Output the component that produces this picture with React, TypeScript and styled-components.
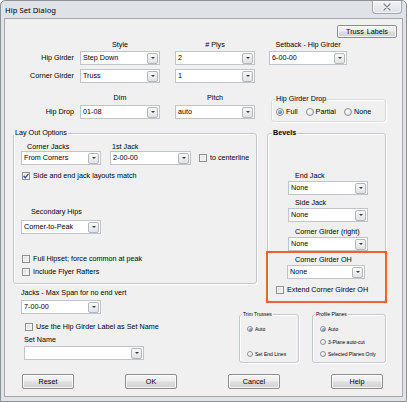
import React from 'react';
import styled, { createGlobalStyle } from 'styled-components';

const GlobalStyle = createGlobalStyle`
  * { box-sizing: border-box; }
  html, body { margin: 0; padding: 0; background: #ffffff; }
  body {
    font-family: "Liberation Sans", Arial, sans-serif;
    font-size: 7.2px;
    color: #000;
  }
`;

const Window = styled.div`
  width: 407px;
  height: 402px;
  display: flex;
  flex-direction: column;
  background: #dfe3e8;
  border: 1px solid #8d9196;
  border-radius: 5px 5px 0 0;
  overflow: hidden;
`;

const TitleBar = styled.div`
  height: 17px;
  flex-shrink: 0;
  display: flex;
  align-items: flex-start;
  justify-content: space-between;
  padding-left: 4px;
`;

const TitleText = styled.span`
  margin-top: 4px;
  font-family: "Noto Sans", "Liberation Sans", sans-serif;
  font-size: 7.7px;
  line-height: 10px;
  color: #000;
`;

const CloseButton = styled.div`
  width: 30px;
  height: 13px;
  margin-right: 4px;
  border: 1px solid #a4a8ae;
  border-top: none;
  border-radius: 0 0 4px 4px;
  background: linear-gradient(#f1f3f5, #dde1e6);
  box-shadow: inset 0 0 0 1px rgba(255, 255, 255, 0.6);
  display: flex;
  align-items: center;
  justify-content: center;
`;

const Client = styled.div`
  flex: 1;
  margin: 0 3px 4px 3px;
  background: #f0f0f0;
  border: 1px solid #a3a6ab;
  display: flex;
  flex-direction: column;
  padding-top: 6px;
`;

const TopBar = styled.div`
  display: flex;
  justify-content: flex-end;
  padding-right: 5px;
`;

const PushButton = styled.div<{ $w: number; $h: number }>`
  width: ${(p) => p.$w}px;
  height: ${(p) => p.$h}px;
  flex-shrink: 0;
  border: 1px solid #8b8d90;
  border-radius: 2px;
  background: linear-gradient(#f6f6f6 0%, #ececec 48%, #dedede 52%, #d2d2d2 100%);
  box-shadow: inset 0 0 0 1px rgba(255, 255, 255, 0.75);
  display: flex;
  align-items: center;
  justify-content: center;
  line-height: 8px;
  white-space: nowrap;
  word-spacing: 1px;
`;

const FormRow = styled.div<{ $mt?: number }>`
  display: flex;
  align-items: flex-start;
  margin-top: ${(p) => p.$mt ?? 0}px;
`;

const Column = styled.div<{ $w?: number }>`
  ${(p) => (p.$w ? `width: ${p.$w}px; flex-shrink: 0;` : 'flex: 1;')}
  display: flex;
  flex-direction: column;
`;

const ColHeader = styled.div<{ $w: number; $h: number }>`
  width: ${(p) => p.$w}px;
  height: ${(p) => p.$h}px;
  display: flex;
  align-items: center;
  justify-content: center;
  white-space: nowrap;
  line-height: 8px;
`;

const FieldStack = styled.div`
  display: flex;
  flex-direction: column;
  gap: 4px;
`;

const RowLabel = styled.div`
  height: 14px;
  display: flex;
  align-items: center;
  justify-content: flex-end;
  padding-right: 6px;
  white-space: nowrap;
  line-height: 8px;
`;

const Label = styled.div<{ $mt?: number; $ml?: number }>`
  margin-top: ${(p) => p.$mt ?? 0}px;
  margin-left: ${(p) => p.$ml ?? 0}px;
  height: 8px;
  line-height: 8px;
  white-space: nowrap;
`;

const ComboFrame = styled.div<{ $w: number; $mt?: number; $ml?: number }>`
  width: ${(p) => p.$w}px;
  height: 14px;
  flex-shrink: 0;
  margin-top: ${(p) => p.$mt ?? 0}px;
  margin-left: ${(p) => p.$ml ?? 0}px;
  background: #ffffff;
  border: 1px solid #c1c4c9;
  display: flex;
  align-items: center;
  padding-left: 2px;
`;

const ComboText = styled.span`
  flex: 1;
  overflow: hidden;
  white-space: nowrap;
  line-height: 12px;
`;

const ComboButton = styled.span`
  width: 11px;
  height: 11px;
  margin-right: 1px;
  border: 1px solid #b3b6bb;
  border-radius: 2px;
  background: linear-gradient(#f8f8f8, #e0e2e5);
  display: flex;
  align-items: center;
  justify-content: center;
  &::after {
    content: '';
    border-left: 2px solid transparent;
    border-right: 2px solid transparent;
    border-top: 2px solid #3c3c3c;
  }
`;

function Combo({ w, value, mt, ml }: { w: number; value: string; mt?: number; ml?: number }) {
  return (
    <ComboFrame $w={w} $mt={mt} $ml={ml}>
      <ComboText>{value}</ComboText>
      <ComboButton />
    </ComboFrame>
  );
}

const Group = styled.div<{ $w: number; $h?: number; $light?: boolean }>`
  position: relative;
  width: ${(p) => p.$w}px;
  ${(p) => (p.$h ? `height: ${p.$h}px;` : '')}
  flex-shrink: 0;
  border: 1px solid ${(p) => (p.$light ? '#dadcde' : '#c4c7cb')};
  border-radius: 3px;
  box-shadow: inset 1px 1px 0 #ffffff, 1px 1px 0 #ffffff;
  display: flex;
  flex-direction: column;
`;

const GroupTitle = styled.span<{ $left: number; $small?: boolean; $bold?: boolean }>`
  position: absolute;
  top: ${(p) => (p.$small ? -4 : -5)}px;
  left: ${(p) => p.$left}px;
  padding: 0 1px;
  background: #f0f0f0;
  font-size: ${(p) => (p.$small ? 5 : 7.2)}px;
  line-height: ${(p) => (p.$small ? 6 : 8)}px;
  font-weight: ${(p) => (p.$bold ? 700 : 400)};
  white-space: nowrap;
`;

const DropGroup = styled(Group)`
  margin-top: 8px;
  margin-left: 2px;
`;

const RadioRow = styled.div`
  display: flex;
  align-items: center;
  gap: 8px;
  padding: 8px 0 0 4px;
`;

const RadioItem = styled.div<{ $small?: boolean }>`
  display: flex;
  align-items: center;
  gap: 2px;
  white-space: nowrap;
  font-size: ${(p) => (p.$small ? 5 : 7.2)}px;
  line-height: ${(p) => (p.$small ? 6 : 8)}px;
`;

const RadioCircle = styled.span<{ $on?: boolean; $size: number }>`
  width: ${(p) => p.$size}px;
  height: ${(p) => p.$size}px;
  flex-shrink: 0;
  border-radius: 50%;
  border: 1px solid #8f9091;
  background: radial-gradient(circle at 35% 35%, #ffffff, #d6d6d6);
  display: flex;
  align-items: center;
  justify-content: center;
  &::after {
    content: '';
    display: ${(p) => (p.$on ? 'block' : 'none')};
    width: ${(p) => (p.$size > 7 ? 4 : 3)}px;
    height: ${(p) => (p.$size > 7 ? 4 : 3)}px;
    border-radius: 50%;
    background: radial-gradient(circle at 40% 35%, #a9c4e6, #2a5596);
  }
`;

function Radio({ label, on, small }: { label: string; on?: boolean; small?: boolean }) {
  return (
    <RadioItem $small={small}>
      <RadioCircle $on={on} $size={small ? 6 : 8} />
      <span>{label}</span>
    </RadioItem>
  );
}

const CheckItem = styled.div<{ $mt?: number; $ml?: number; $mb?: number }>`
  display: flex;
  align-items: center;
  gap: 3px;
  margin-top: ${(p) => p.$mt ?? 0}px;
  margin-left: ${(p) => p.$ml ?? 0}px;
  margin-bottom: ${(p) => p.$mb ?? 0}px;
  white-space: nowrap;
  line-height: 8px;
`;

const CheckBox = styled.span`
  width: 8px;
  height: 8px;
  flex-shrink: 0;
  border: 1px solid #8e8f8f;
  background: linear-gradient(135deg, #d9d9d9, #fbfbfb);
  box-shadow: inset 0 0 0 1px #f3f3f3;
  display: flex;
  align-items: center;
  justify-content: center;
`;

function Check({ label, checked, mt, ml, mb }: { label: string; checked?: boolean; mt?: number; ml?: number; mb?: number }) {
  return (
    <CheckItem $mt={mt} $ml={ml} $mb={mb}>
      <CheckBox>
        {checked && (
          <svg width="6" height="6" viewBox="0 0 6 6">
            <path d="M0.6 3 L2.3 4.8 L5.4 0.9" fill="none" stroke="#2d4f86" strokeWidth="1.3" />
          </svg>
        )}
      </CheckBox>
      <span>{label}</span>
    </CheckItem>
  );
}

const MidSection = styled.div`
  display: flex;
  align-items: flex-start;
  gap: 10px;
  margin-top: 11px;
  padding-left: 8px;
`;

const LeftColumn = styled.div`
  width: 244px;
  flex-shrink: 0;
  display: flex;
  flex-direction: column;
`;

const LayoutGroup = styled(Group)`
  padding-top: 9px;
`;

const JackRow = styled.div`
  display: flex;
  align-items: flex-end;
  margin-left: 7px;
`;

const FieldCol = styled.div<{ $ml?: number }>`
  display: flex;
  flex-direction: column;
  margin-left: ${(p) => p.$ml ?? 0}px;
`;

const BevelGroup = styled(Group)`
  padding-top: 38px;
`;

const Highlight = styled.div`
  position: relative;
  z-index: 1;
  margin: 0 -2px -2px -2px;
  border: 2px solid #f0612b;
  display: flex;
  flex-direction: column;
  padding-bottom: 7px;
`;

const LowerSection = styled.div`
  display: flex;
  align-items: flex-start;
`;

const LowerLeft = styled.div`
  width: 234px;
  flex-shrink: 0;
  display: flex;
  flex-direction: column;
  padding-left: 19px;
`;

const SmallGroup = styled(Group)<{ $ml?: number }>`
  margin-left: ${(p) => p.$ml ?? 0}px;
  justify-content: space-between;
  padding: 11px 0 5px 7px;
`;

const ButtonRow = styled.div`
  display: flex;
  gap: 51px;
  margin-top: 11px;
  padding-left: 17px;
`;

export default function App() {
  return (
    <>
      <GlobalStyle />
      <Window>
        <TitleBar>
          <TitleText>Hip Set Dialog</TitleText>
          <CloseButton aria-label="Close">
            <svg width="10" height="8" viewBox="0 0 10 8">
              <path d="M2 1 L8 7 M8 1 L2 7" stroke="#ffffff" strokeWidth="3" strokeLinecap="round" />
              <path d="M2 1 L8 7 M8 1 L2 7" stroke="#7b8087" strokeWidth="1.4" strokeLinecap="round" />
            </svg>
          </CloseButton>
        </TitleBar>
        <Client>
          <TopBar>
            <PushButton $w={60} $h={13}>Truss Labels</PushButton>
          </TopBar>

          <FormRow>
            <Column $w={75}>
              <ColHeader $w={75} $h={13} />
              <FieldStack>
                <RowLabel>Hip Girder</RowLabel>
                <RowLabel>Corner Girder</RowLabel>
              </FieldStack>
            </Column>
            <Column $w={95}>
              <ColHeader $w={80} $h={13}>Style</ColHeader>
              <FieldStack>
                <Combo w={80} value="Step Down" />
                <Combo w={80} value="Truss" />
              </FieldStack>
            </Column>
            <Column $w={94}>
              <ColHeader $w={80} $h={13}># Plys</ColHeader>
              <FieldStack>
                <Combo w={80} value="2" />
                <Combo w={80} value="1" />
              </FieldStack>
            </Column>
            <Column>
              <ColHeader $w={78} $h={13}>Setback - Hip Girder</ColHeader>
              <FieldStack>
                <Combo w={78} value="6-00-00" />
              </FieldStack>
            </Column>
          </FormRow>

          <FormRow $mt={8}>
            <Column $w={75}>
              <ColHeader $w={75} $h={14} />
              <RowLabel>Hip Drop</RowLabel>
            </Column>
            <Column $w={95}>
              <ColHeader $w={80} $h={14}>Dim</ColHeader>
              <Combo w={80} value="01-08" />
            </Column>
            <Column $w={94}>
              <ColHeader $w={80} $h={14}>Pitch</ColHeader>
              <Combo w={80} value="auto" />
            </Column>
            <DropGroup $w={115} $h={23} $light>
              <GroupTitle $left={3}>Hip Girder Drop</GroupTitle>
              <RadioRow>
                <Radio label="Full" on />
                <Radio label="Partial" />
                <Radio label="None" />
              </RadioRow>
            </DropGroup>
          </FormRow>

          <MidSection>
            <LeftColumn>
              <LayoutGroup $w={244} $h={151}>
                <GroupTitle $left={0}>Lay Out Options</GroupTitle>
                <JackRow>
                  <FieldCol>
                    <Label $ml={6}>Corner Jacks</Label>
                    <Combo w={80} value="From Corners" />
                  </FieldCol>
                  <FieldCol $ml={9}>
                    <Label $ml={2}>1st Jack</Label>
                    <Combo w={81} value="2-00-00" />
                  </FieldCol>
                  <Check label="to centerline" ml={8} mb={3} />
                </JackRow>
                <Check label="Side and end jack layouts match" checked mt={7} ml={8} />
                <Label $mt={28} $ml={17}>Secondary Hips</Label>
                <Combo w={80} value="Corner-to-Peak" mt={4} ml={7} />
                <Check label="Full Hipset; force common at peak" mt={21} ml={8} />
                <Check label="Include Flyer Rafters" mt={5} ml={8} />
              </LayoutGroup>
              <Label $mt={5} $ml={8}>Jacks - Max Span for no end vert</Label>
              <Combo w={80} value="7-00-00" mt={3} ml={8} />
            </LeftColumn>

            <BevelGroup $w={119}>
              <GroupTitle $left={4} $bold>Bevels</GroupTitle>
              <Label $ml={27}>End Jack</Label>
              <Combo w={80} value="None" mt={1} ml={20} />
              <Label $mt={4} $ml={27}>Side Jack</Label>
              <Combo w={80} value="None" mt={1} ml={20} />
              <Label $mt={6} $ml={27}>Corner Girder (right)</Label>
              <Combo w={80} value="None" mt={1} ml={20} />
              <Highlight>
                <Label $mt={3} $ml={27}>Corner Girder OH</Label>
                <Combo w={78} value="None" mt={1} ml={19} />
                <Check label="Extend Corner Girder OH" mt={7} ml={8} />
              </Highlight>
            </BevelGroup>
          </MidSection>

          <LowerSection>
            <LowerLeft>
              <Check label="Use the Hip Girder Label as Set Name" mt={9} ml={1} />
              <Label $mt={5}>Set Name</Label>
              <Combo w={120} value="" mt={2} />
            </LowerLeft>
            <SmallGroup $w={60} $h={49}>
              <GroupTitle $left={2} $small>Trim Trusses</GroupTitle>
              <Radio label="Auto" on small />
              <Radio label="Set End Lines" small />
            </SmallGroup>
            <SmallGroup $w={74} $h={49} $ml={13}>
              <GroupTitle $left={2} $small>Profile Planes</GroupTitle>
              <Radio label="Auto" on small />
              <Radio label="3-Plane auto-cut" small />
              <Radio label="Selected Planes Only" small />
            </SmallGroup>
          </LowerSection>

          <ButtonRow>
            <PushButton $w={52} $h={15}>Reset</PushButton>
            <PushButton $w={52} $h={15}>OK</PushButton>
            <PushButton $w={52} $h={15}>Cancel</PushButton>
            <PushButton $w={52} $h={15}>Help</PushButton>
          </ButtonRow>
        </Client>
      </Window>
    </>
  );
}
